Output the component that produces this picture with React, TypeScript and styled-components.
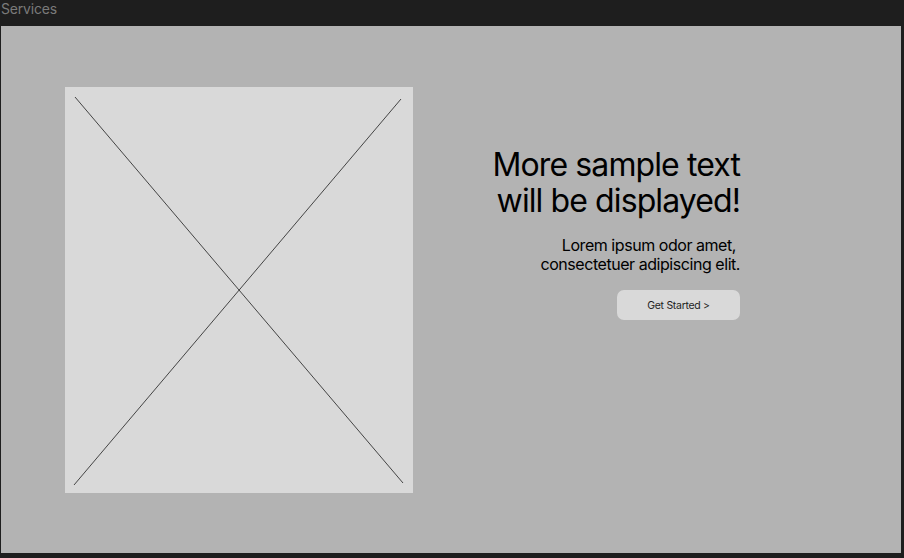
import React from "react";
import styled, { createGlobalStyle } from "styled-components";

const Global = createGlobalStyle`
  html, body { margin: 0; padding: 0; background: #1e1e1e; }
  body { font-family: Inter, "Noto Sans", sans-serif; width: 904px; height: 558px; overflow: hidden; }
`;

const Page = styled.div`
  display: flex;
  flex-direction: column;
  width: 904px;
  height: 558px;
`;

const Label = styled.div`
  height: 26px;
  padding-left: 1px;
  font-size: 14px;
  line-height: 17px;
  color: #7a7a7a;
  letter-spacing: -0.2px;
`;

const Frame = styled.section`
  margin-left: 1px;
  width: 900px;
  height: 527px;
  background: #b3b3b3;
  display: flex;
  box-sizing: border-box;
  padding: 61px 0 0 64px;
`;

const Placeholder = styled.div`
  width: 348px;
  height: 406px;
  background: #d9d9d9;
  flex-shrink: 0;
  svg { display: block; }
`;

const Content = styled.div`
  width: 327px;
  padding-top: 60px;
  display: flex;
  flex-direction: column;
  align-items: flex-end;
  text-align: right;
`;

const Heading = styled.h1`
  margin: 0;
  font-weight: 400;
  font-size: 32px;
  line-height: 36px;
  letter-spacing: -0.9px;
  color: #000;
`;

const Body = styled.p`
  margin: 17px 0 0;
  font-size: 16px;
  line-height: 19px;
  letter-spacing: -0.45px;
  color: #000;
`;

const Button = styled.button`
  margin-top: 16px;
  width: 123px;
  height: 30px;
  border: none;
  border-radius: 7px;
  background: #d9d9d9;
  font-family: Inter, "Noto Sans", sans-serif;
  font-size: 10.5px;
  letter-spacing: -0.3px;
  color: #1e1e1e;
  padding: 0;
`;

export default function App() {
  return (
    <Page>
      <Global />
      <Label>Services</Label>
      <Frame>
        <Placeholder>
          <svg width="348" height="406" viewBox="0 0 348 406">
            <line x1="10" y1="10" x2="338" y2="396" stroke="#1e1e1e" strokeWidth="0.8" />
            <line x1="336" y1="12" x2="9" y2="398" stroke="#1e1e1e" strokeWidth="0.8" />
          </svg>
        </Placeholder>
        <Content>
          <Heading>
            More sample text
            <br />
            will be displayed!
          </Heading>
          <Body>
            Lorem ipsum odor amet,&nbsp;
            <br />
            consectetuer adipiscing elit.
          </Body>
          <Button>Get Started &gt;</Button>
        </Content>
      </Frame>
    </Page>
  );
}
